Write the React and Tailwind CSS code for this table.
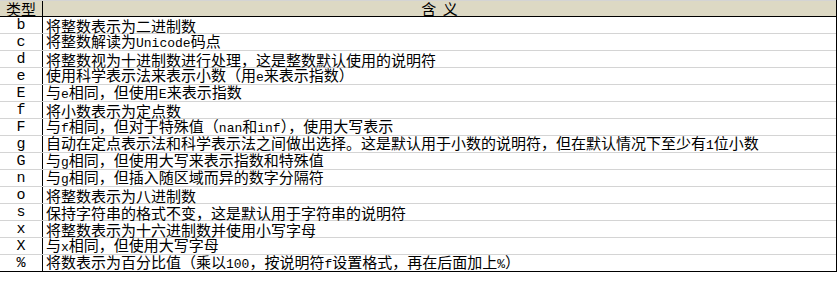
import React from 'react';

const ROWS = [
  ['b', '将整数表示为二进制数'],
  ['c', '将整数解读为Unicode码点'],
  ['d', '将整数视为十进制数进行处理，这是整数默认使用的说明符'],
  ['e', '使用科学表示法来表示小数（用e来表示指数）'],
  ['E', '与e相同，但使用E来表示指数'],
  ['f', '将小数表示为定点数'],
  ['F', '与f相同，但对于特殊值（nan和inf），使用大写表示'],
  ['g', '自动在定点表示法和科学表示法之间做出选择。这是默认用于小数的说明符，但在默认情况下至少有1位小数'],
  ['G', '与g相同，但使用大写来表示指数和特殊值'],
  ['n', '与g相同，但插入随区域而异的数字分隔符'],
  ['o', '将整数表示为八进制数'],
  ['s', '保持字符串的格式不变，这是默认用于字符串的说明符'],
  ['x', '将整数表示为十六进制数并使用小写字母'],
  ['X', '与x相同，但使用大写字母'],
  ['%', '将数表示为百分比值（乘以100，按说明符f设置格式，再在后面加上%）'],
];

// latin runs get a half-width mono face, like the SimSun sheet
function Mixed({ text }) {
  const parts = text.split(/([\x20-\x7e]+)/).filter(Boolean);
  return (
    <span className="block leading-[16px]">
      {parts.map((p, i) =>
        /^[\x20-\x7e]+$/.test(p) ? (
          <span key={i} className="font-['Liberation_Mono',monospace] text-[13px]">
            {p}
          </span>
        ) : (
          <span key={i}>{p}</span>
        )
      )}
    </span>
  );
}

export default function App() {
  return (
    <div className="w-[838px] h-[289px] bg-white text-black font-['Noto_Sans_CJK_SC','Noto_Sans',sans-serif] text-[15px] leading-[16px] overflow-hidden">
      <div className="w-[837px] border-r border-black">
        <div className="flex h-[17px] border-t border-b border-t-[#d4d4d4] border-b-black bg-[#ddd9c4]">
          <div className="w-[43px] shrink-0 border-r border-black flex items-center justify-center">
            <span className="block leading-[15px]">类型</span>
          </div>
          <div className="flex-1 flex items-center justify-center">
            <span className="block leading-[15px] whitespace-pre">含  义</span>
          </div>
        </div>
        {ROWS.map(([type, desc], i) => (
          <div
            key={type}
            className={`flex h-[17px] border-b ${
              i === ROWS.length - 1 ? 'border-black' : 'border-[#d4d4d4]'
            }`}
          >
            <div className="w-[43px] shrink-0 border-r border-black flex items-center justify-center pt-px font-['Liberation_Mono',monospace] text-[15px]">
              {type}
            </div>
            <div className="flex-1 flex items-center pl-[3px] pt-px whitespace-nowrap">
              <Mixed text={desc} />
            </div>
          </div>
        ))}
      </div>
    </div>
  );
}
